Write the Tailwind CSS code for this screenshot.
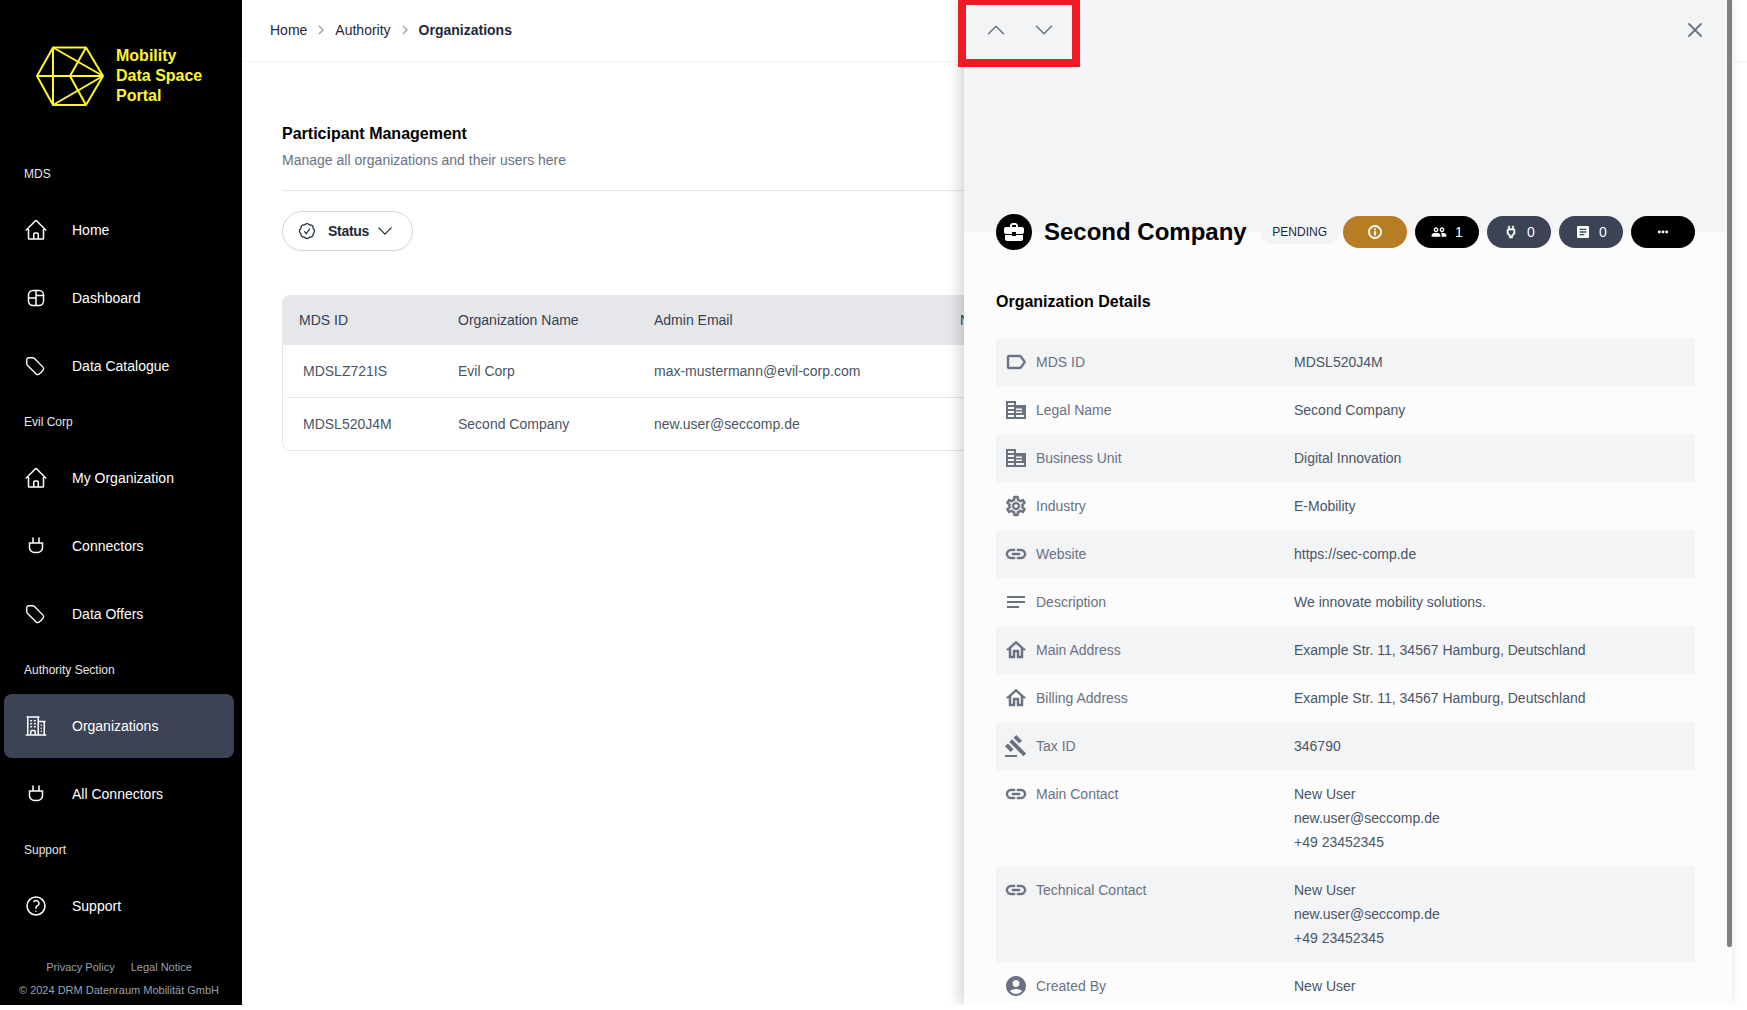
<!DOCTYPE html>
<html lang="en">
<head>
<meta charset="utf-8">
<title>Organizations</title>
<script src="https://cdn.jsdelivr.net/npm/@tailwindcss/browser@4"></script>
</head>
<body class="bg-white overflow-hidden font-['Liberation_Sans',Arial,sans-serif]">
<div class="relative flex h-[1005px] w-full overflow-hidden">

  <!-- Sidebar -->
  <aside class="w-[242px] shrink-0 bg-black flex flex-col text-white">
    <div class="flex items-center gap-3 pt-[46px] pl-[36px] mb-[60px]">
      <svg class="w-[68px] h-[60px] shrink-0" viewBox="0 0 68 60" fill="none" stroke="#fdf62f" stroke-width="2" stroke-linejoin="round"><path d="M1 30 17 1.500H50L67 30 50 59H17Z"/><path d="M1 30H67M17 1.500V59M17 1.500 67 30M17 59 67 30M50 1.500 34 30 50 59"/></svg>
      <div class="text-[16px] leading-5 font-bold text-[#fdf62f]"><div>Mobility</div><div>Data Space</div><div>Portal</div></div>
    </div>

    <div class="flex flex-col gap-4">
      <section class="flex flex-col gap-4">
        <div class="pl-6 text-xs leading-4 text-gray-200">MDS</div>
        <nav class="flex flex-col gap-1">
          <a class="ml-1 mr-2 h-16 px-5 flex items-center gap-6 rounded-lg text-sm"><svg class="w-6 h-6" viewBox="0 0 24 24" fill="none" stroke="currentColor" stroke-width="1.500" stroke-linecap="round" stroke-linejoin="round"><path d="M2.250 12l8.954-8.955c.44-.439 1.152-.439 1.591 0L21.750 12M4.500 9.750v10.125c0 .621.504 1.125 1.125 1.125H9.750v-4.875c0-.621.504-1.125 1.125-1.125h2.250c.621 0 1.125.504 1.125 1.125V21h4.125c.621 0 1.125-.504 1.125-1.125V9.750M8.250 21h8.250"/></svg>Home</a>
          <a class="ml-1 mr-2 h-16 px-5 flex items-center gap-6 rounded-lg text-sm"><svg class="w-6 h-6" viewBox="0 0 24 24" fill="none" stroke="currentColor" stroke-width="1.500" stroke-linecap="round" stroke-linejoin="round"><rect x="4.500" y="4.500" width="15" height="15" rx="4.500"/><path d="M12 4.500V19.500M4.500 12H12M12 9.500H19.500"/></svg>Dashboard</a>
          <a class="ml-1 mr-2 h-16 px-5 flex items-center gap-6 rounded-lg text-sm"><svg class="w-[22px] h-[22px] mr-[2px]" viewBox="0 0 24 24" fill="none" stroke="currentColor" stroke-width="1.500" stroke-linecap="round" stroke-linejoin="round"><path d="M9.568 3H5.250A2.250 2.250 0 0 0 3 5.250v4.318c0 .597.237 1.170.659 1.591l9.581 9.581c.699.699 1.780.872 2.607.33a18.095 18.095 0 0 0 5.223-5.223c.542-.827.369-1.908-.33-2.607L11.160 3.660A2.250 2.250 0 0 0 9.568 3Z"/></svg>Data Catalogue</a>
        </nav>
      </section>
      <section class="flex flex-col gap-4">
        <div class="pl-6 text-xs leading-4 text-gray-200">Evil Corp</div>
        <nav class="flex flex-col gap-1">
          <a class="ml-1 mr-2 h-16 px-5 flex items-center gap-6 rounded-lg text-sm"><svg class="w-6 h-6" viewBox="0 0 24 24" fill="none" stroke="currentColor" stroke-width="1.500" stroke-linecap="round" stroke-linejoin="round"><path d="M2.250 12l8.954-8.955c.44-.439 1.152-.439 1.591 0L21.750 12M4.500 9.750v10.125c0 .621.504 1.125 1.125 1.125H9.750v-4.875c0-.621.504-1.125 1.125-1.125h2.250c.621 0 1.125.504 1.125 1.125V21h4.125c.621 0 1.125-.504 1.125-1.125V9.750M8.250 21h8.250"/></svg>My Organization</a>
          <a class="ml-1 mr-2 h-16 px-5 flex items-center gap-6 rounded-lg text-sm"><svg class="w-6 h-6" viewBox="0 0 24 24" fill="none" stroke="currentColor" stroke-width="1.500" stroke-linecap="round" stroke-linejoin="round"><path d="M9 4v5M15 4v5M5.500 9h13v4.500a5 5 0 0 1-5 5h-3a5 5 0 0 1-5-5Z"/></svg>Connectors</a>
          <a class="ml-1 mr-2 h-16 px-5 flex items-center gap-6 rounded-lg text-sm"><svg class="w-[22px] h-[22px] mr-[2px]" viewBox="0 0 24 24" fill="none" stroke="currentColor" stroke-width="1.500" stroke-linecap="round" stroke-linejoin="round"><path d="M9.568 3H5.250A2.250 2.250 0 0 0 3 5.250v4.318c0 .597.237 1.170.659 1.591l9.581 9.581c.699.699 1.780.872 2.607.33a18.095 18.095 0 0 0 5.223-5.223c.542-.827.369-1.908-.33-2.607L11.160 3.660A2.250 2.250 0 0 0 9.568 3Z"/></svg>Data Offers</a>
        </nav>
      </section>
      <section class="flex flex-col gap-4">
        <div class="pl-6 text-xs leading-4 text-gray-200">Authority Section</div>
        <nav class="flex flex-col gap-1">
          <a class="ml-1 mr-2 h-16 px-5 flex items-center gap-6 rounded-lg text-sm bg-[#3b4354]"><svg class="w-6 h-6" viewBox="0 0 24 24" fill="none" stroke="currentColor" stroke-width="1.500" stroke-linecap="round" stroke-linejoin="round"><path d="M2.250 21h19.500m-18-18v18m10.500-18v18m6-13.500V21M6.750 6.750h.75m-.75 3h.75m-.75 3h.75m3-6h.75m-.75 3h.75m-.75 3h.75M6.750 21v-3.375c0-.621.504-1.125 1.125-1.125h2.250c.621 0 1.125.504 1.125 1.125V21M3 3h12m-.75 4.500H21m-3.750 3.750h.008v.008h-.008v-.008Zm0 3h.008v.008h-.008v-.008Zm0 3h.008v.008h-.008v-.008Z"/></svg>Organizations</a>
          <a class="ml-1 mr-2 h-16 px-5 flex items-center gap-6 rounded-lg text-sm"><svg class="w-6 h-6" viewBox="0 0 24 24" fill="none" stroke="currentColor" stroke-width="1.500" stroke-linecap="round" stroke-linejoin="round"><path d="M9 4v5M15 4v5M5.500 9h13v4.500a5 5 0 0 1-5 5h-3a5 5 0 0 1-5-5Z"/></svg>All Connectors</a>
        </nav>
      </section>
      <section class="flex flex-col gap-4">
        <div class="pl-6 text-xs leading-4 text-gray-200">Support</div>
        <nav class="flex flex-col gap-1">
          <a class="ml-1 mr-2 h-16 px-5 flex items-center gap-6 rounded-lg text-sm"><svg class="w-6 h-6" viewBox="0 0 24 24" fill="none" stroke="currentColor" stroke-width="1.500" stroke-linecap="round" stroke-linejoin="round"><path d="M9.879 7.519c1.171-1.025 3.071-1.025 4.242 0 1.172 1.025 1.172 2.687 0 3.712-.203.179-.43.326-.67.442-.745.361-1.450.999-1.450 1.827v.75M21 12a9 9 0 1 1-18 0 9 9 0 0 1 18 0Zm-9 5.250h.008v.008H12v-.008Z"/></svg>Support</a>
        </nav>
      </section>
    </div>

    <footer class="mt-[21px] text-[11px] leading-4 text-gray-400 flex flex-col items-center gap-[7px] pr-[4px]">
      <div class="flex gap-4"><span>Privacy Policy</span><span>Legal Notice</span></div>
      <div>© 2024 DRM Datenraum Mobilität GmbH</div>
    </footer>
  </aside>

  <!-- Main -->
  <main class="flex-1 min-w-0 flex flex-col">
    <div class="h-[62px] shrink-0 border-b border-gray-100 px-[28px] flex items-center gap-[5px] text-sm text-gray-800 pb-[2px]">
      <span>Home</span>
      <svg class="w-4 h-4 mx-[1px] text-gray-400" viewBox="0 0 24 24" fill="none" stroke="currentColor" stroke-width="2"><path d="M9 6l6 6-6 6"/></svg>
      <span>Authority</span>
      <svg class="w-4 h-4 mx-[1px] text-gray-400" viewBox="0 0 24 24" fill="none" stroke="currentColor" stroke-width="2"><path d="M9 6l6 6-6 6"/></svg>
      <span class="font-bold">Organizations</span>
    </div>
    <div class="px-10 pt-[60px]">
      <h1 class="text-base leading-6 font-bold text-black">Participant Management</h1>
      <p class="mt-[4px] text-sm leading-5 text-gray-500">Manage all organizations and their users here</p>
      <div class="mt-[20px] border-t border-gray-200"></div>
      <button class="mt-5 w-[131px] h-10 rounded-full border border-gray-300 pl-[14px] flex items-center text-sm font-bold text-gray-800 shadow-xs">
        <svg class="w-5 h-5 mr-[11px]" viewBox="0 0 24 24" fill="none" stroke="currentColor" stroke-width="1.500" stroke-linecap="round" stroke-linejoin="round"><path d="M9 12.750 11.250 15 15 9.750M21 12c0 1.268-.63 2.390-1.593 3.068a3.745 3.745 0 0 1-1.043 3.296 3.745 3.745 0 0 1-3.296 1.043A3.745 3.745 0 0 1 12 21c-1.268 0-2.390-.63-3.068-1.593a3.746 3.746 0 0 1-3.296-1.043 3.745 3.745 0 0 1-1.043-3.296A3.745 3.745 0 0 1 3 12c0-1.268.63-2.390 1.593-3.068a3.745 3.745 0 0 1 1.043-3.296 3.746 3.746 0 0 1 3.296-1.043A3.746 3.746 0 0 1 12 3c1.268 0 2.390.63 3.068 1.593a3.746 3.746 0 0 1 3.296 1.043 3.746 3.746 0 0 1 1.043 3.296A3.745 3.745 0 0 1 21 12Z"/></svg>
        <span class="tracking-[-0.3px]">Status</span>
        <svg class="w-5 h-5 ml-[6px]" viewBox="0 0 24 24" fill="none" stroke="currentColor" stroke-width="1.500" stroke-linecap="round" stroke-linejoin="round"><path d="m4.500 8.250 7.500 7.500 7.500-7.500"/></svg>
      </button>
      <div class="mt-[44px] rounded-lg border border-gray-200 overflow-hidden text-sm">
        <div class="h-[50px] -mx-px -mt-px bg-gray-200 flex items-center pl-[17px] text-gray-700">
          <div class="w-[159px]">MDS ID</div><div class="w-[196px]">Organization Name</div><div class="w-[306px]">Admin Email</div><div>Name</div>
        </div>
        <div class="mx-1 h-[53px] border-b border-gray-200 flex items-center pl-[16px] text-gray-600">
          <div class="w-[155px]">MDSLZ721IS</div><div class="w-[196px]">Evil Corp</div><div>max-mustermann@evil-corp.com</div>
        </div>
        <div class="mx-1 h-[52px] flex items-center pl-[16px] text-gray-600">
          <div class="w-[155px]">MDSL520J4M</div><div class="w-[196px]">Second Company</div><div>new.user@seccomp.de</div>
        </div>
      </div>
    </div>
  </main>

  <!-- Drawer -->
  <div class="absolute top-0 left-[964px] w-[768px] h-[1005px] bg-[#fcfcfc] shadow-[-4px_0_14px_rgba(0,0,0,0.18)] overflow-hidden">
    <div class="w-[763px]">
      <div class="h-[232px] bg-gray-100 px-8 pt-[18px] flex items-start justify-between text-gray-500">
        <div class="flex gap-6 -ml-3">
          <svg class="w-6 h-6" viewBox="0 0 24 24" fill="none" stroke="currentColor" stroke-width="1.500" stroke-linecap="round" stroke-linejoin="round"><path d="m4.500 15.750 7.500-7.500 7.500 7.500"/></svg>
          <svg class="w-6 h-6" viewBox="0 0 24 24" fill="none" stroke="currentColor" stroke-width="1.500" stroke-linecap="round" stroke-linejoin="round"><path d="m19.500 8.250-7.500 7.500-7.500-7.500"/></svg>
        </div>
        <svg class="w-6 h-6 -mr-3" viewBox="0 0 24 24" fill="none" stroke="currentColor" stroke-width="1.800" stroke-linecap="round" stroke-linejoin="round"><path d="M6 18 18 6M6 6l12 12"/></svg>
      </div>

      <div class="relative -mt-[18px] px-8 flex items-center h-9">
        <span class="w-9 h-9 rounded-full bg-black flex items-center justify-center shrink-0"><svg class="w-6 h-6" viewBox="0 0 24 24" fill="#fff"><path d="M10 16v-1H3.010L3 19c0 1.110.89 2 2 2h14c1.110 0 2-.89 2-2v-4h-7v1h-4zm10-9h-4.010V5l-2-2h-4l-2 2v2H4c-1.100 0-2 .9-2 2v3c0 1.110.89 2 2 2h6v-2h4v2h6c1.100 0 2-.9 2-2V9c0-1.100-.9-2-2-2zm-6 0h-4V5h4v2z"/></svg></span>
        <h2 class="ml-3 text-2xl font-bold text-black whitespace-nowrap">Second Company</h2>
        <span class="ml-[14px] w-[78px] h-6 rounded-full bg-gray-100 flex items-center justify-center text-xs text-gray-800">PENDING</span>
        <div class="ml-auto flex gap-2 text-white text-sm">
          <span class="w-16 h-8 rounded-full bg-[#b67d24] flex items-center justify-center"><svg class="w-4 h-4" viewBox="0 0 24 24" fill="currentColor" stroke="currentColor" stroke-width=".8"><path d="M11 7h2v2h-2zm0 4h2v6h-2zm1-9C6.480 2 2 6.480 2 12s4.480 10 10 10 10-4.480 10-10S17.520 2 12 2zm0 18c-4.410 0-8-3.590-8-8s3.590-8 8-8 8 3.590 8 8-3.590 8-8 8z"/></svg></span>
          <span class="w-16 h-8 rounded-full bg-black flex items-center justify-center gap-2"><svg class="w-4 h-4" viewBox="0 0 24 24" fill="currentColor"><path fill-rule="evenodd" d="M7.500 12C9.430 12 11 10.430 11 8.500S9.430 5 7.500 5 4 6.570 4 8.500 5.570 12 7.500 12zm0-5c.83 0 1.500.67 1.500 1.500S8.330 10 7.500 10 6 9.330 6 8.500 6.670 7 7.500 7zm9 5c1.930 0 3.500-1.570 3.500-3.500S18.430 5 16.500 5 13 6.570 13 8.500s1.570 3.500 3.500 3.500zm0-5c.83 0 1.500.67 1.500 1.500s-.67 1.500-1.500 1.500-1.500-.67-1.500-1.500.67-1.500 1.500-1.500zM7.500 13C5.330 13 1 14.080 1 16.250V19h13v-2.750C14 14.080 9.670 13 7.500 13zm9 0c-.6 0-1.300.08-2 .24 1.100.73 1.500 1.800 1.500 3.010V19h7v-2.750C23 14.080 18.670 13 16.500 13z"/></svg>1</span>
          <span class="w-16 h-8 rounded-full bg-[#3b4354] flex items-center justify-center gap-2"><svg class="w-4 h-4" viewBox="0 0 24 24" fill="currentColor" stroke="currentColor" stroke-width=".8"><path d="M16.010 7L16 3h-2v4h-4V3H8v4h-.01C7 6.990 6 7.990 6 8.990v5.490L9.500 18v3h5v-3l3.500-3.510v-5.500c0-1-1-2-1.990-1.990zM16 13.650l-3.500 3.520V19h-1v-1.830L8 13.650V9h8v4.650z"/></svg>0</span>
          <span class="w-16 h-8 rounded-full bg-[#3b4354] flex items-center justify-center gap-2"><svg class="w-4 h-4" viewBox="0 0 24 24" fill="currentColor"><path d="M19 3H5c-1.100 0-2 .9-2 2v14c0 1.100.9 2 2 2h14c1.100 0 2-.9 2-2V5c0-1.100-.9-2-2-2zm-5 14H7v-2h7v2zm3-4H7v-2h10v2zm0-4H7V7h10v2z"/></svg>0</span>
          <span class="w-16 h-8 rounded-full bg-black flex items-center justify-center"><svg class="w-4 h-4" viewBox="0 0 24 24" fill="currentColor"><circle cx="6.500" cy="12" r="2.200"/><circle cx="12" cy="12" r="2.200"/><circle cx="17.500" cy="12" r="2.200"/></svg></span>
        </div>
      </div>

      <h3 class="mx-8 mt-[40px] text-base leading-6 font-bold text-black">Organization Details</h3>

      <div class="mx-8 mt-[24px] text-sm leading-6">
        <div class="flex px-2 py-3 bg-gray-100"><div class="w-[290px] flex gap-2 text-gray-500"><svg class="w-6 h-6" viewBox="0 0 24 24" fill="currentColor" stroke="currentColor" stroke-width=".4"><path d="M17.630 5.840C17.270 5.330 16.670 5 16 5L5 5.010C3.900 5.010 3 5.900 3 7v10c0 1.100.9 1.990 2 1.990L16 19c.67 0 1.270-.33 1.630-.84L22 12l-4.370-6.160zM16 17H5V7h11l3.550 5L16 17z"/></svg>MDS ID</div><div class="text-gray-600">MDSL520J4M</div></div>
        <div class="flex px-2 py-3"><div class="w-[290px] flex gap-2 text-gray-500"><svg class="w-6 h-6" viewBox="0 0 24 24" fill="currentColor"><path d="M12 7V3H2v18h20V7H12zM10 19H4v-2h6v2zm0-4H4v-2h6v2zm0-4H4V9h6v2zm0-4H4V5h6v2zm10 12h-8v-2h8v2zm-2-4h-6v-1.500h6V15zm0-3h-6v-1.500h6V12zM20 9h-8V9h8z"/></svg>Legal Name</div><div class="text-gray-600">Second Company</div></div>
        <div class="flex px-2 py-3 bg-gray-100"><div class="w-[290px] flex gap-2 text-gray-500"><svg class="w-6 h-6" viewBox="0 0 24 24" fill="currentColor"><path d="M12 7V3H2v18h20V7H12zM10 19H4v-2h6v2zm0-4H4v-2h6v2zm0-4H4V9h6v2zm0-4H4V5h6v2zm10 12h-8v-2h8v2zm-2-4h-6v-1.500h6V15zm0-3h-6v-1.500h6V12zM20 9h-8V9h8z"/></svg>Business Unit</div><div class="text-gray-600">Digital Innovation</div></div>
        <div class="flex px-2 py-3"><div class="w-[290px] flex gap-2 text-gray-500"><svg class="w-6 h-6" viewBox="0 0 24 24" fill="currentColor" stroke="currentColor" stroke-width=".5"><path d="M19.430 12.980c.04-.32.07-.64.07-.98 0-.34-.03-.66-.07-.98l2.110-1.650c.19-.15.24-.42.12-.64l-2-3.460c-.09-.16-.26-.25-.44-.25-.06 0-.12.01-.17.03l-2.490 1c-.52-.4-1.080-.73-1.690-.98l-.38-2.650C14.460 2.180 14.250 2 14 2h-4c-.25 0-.46.18-.49.42l-.38 2.650c-.61.25-1.170.59-1.690.98l-2.490-1c-.06-.02-.12-.03-.18-.03-.17 0-.34.09-.43.25l-2 3.460c-.13.22-.07.49.12.64l2.110 1.650c-.04.32-.07.65-.07.98 0 .33.03.66.07.98l-2.110 1.650c-.19.15-.24.42-.12.64l2 3.460c.09.16.26.25.44.25.06 0 .12-.01.17-.03l2.490-1c.52.4 1.080.73 1.690.98l.38 2.650c.03.24.24.42.49.42h4c.25 0 .46-.18.49-.42l.38-2.650c.61-.25 1.170-.59 1.690-.98l2.490 1c.06.02.12.03.18.03.17 0 .34-.09.43-.25l2-3.460c.12-.22.07-.49-.12-.64l-2.110-1.650zm-1.980-1.710c.04.31.05.52.05.73 0 .21-.02.43-.05.73l-.14 1.130.89.7 1.080.84-.7 1.210-1.270-.51-1.040-.42-.9.68c-.43.32-.84.56-1.250.73l-1.060.43-.16 1.130-.2 1.350h-1.400l-.19-1.350-.16-1.130-1.060-.43c-.43-.18-.83-.41-1.230-.71l-.91-.7-1.060.43-1.270.51-.7-1.210 1.080-.84.89-.7-.14-1.130c-.03-.31-.05-.54-.05-.74s.02-.43.05-.73l.14-1.130-.89-.7-1.080-.84.7-1.210 1.270.51 1.040.42.9-.68c.43-.32.84-.56 1.250-.73l1.060-.43.16-1.130.2-1.350h1.390l.19 1.350.16 1.130 1.060.43c.43.18.83.41 1.230.71l.91.7 1.060-.43 1.270-.51.7 1.210-1.070.85-.89.7.14 1.130zM12 8c-2.210 0-4 1.790-4 4s1.790 4 4 4 4-1.790 4-4-1.790-4-4-4zm0 6c-1.100 0-2-.9-2-2s.9-2 2-2 2 .9 2 2-.9 2-2 2z"/></svg>Industry</div><div class="text-gray-600">E-Mobility</div></div>
        <div class="flex px-2 py-3 bg-gray-100"><div class="w-[290px] flex gap-2 text-gray-500"><svg class="w-6 h-6" viewBox="0 0 24 24" fill="currentColor" stroke="currentColor" stroke-width=".4"><path d="M3.900 12c0-1.710 1.390-3.100 3.100-3.100h4V7H7c-2.760 0-5 2.240-5 5s2.240 5 5 5h4v-1.900H7c-1.710 0-3.100-1.390-3.100-3.100zM8 13h8v-2H8v2zm9-6h-4v1.900h4c1.710 0 3.100 1.390 3.100 3.100s-1.390 3.100-3.100 3.100h-4V17h4c2.760 0 5-2.240 5-5s-2.240-5-5-5z"/></svg>Website</div><div class="text-gray-600">https://sec-comp.de</div></div>
        <div class="flex px-2 py-3"><div class="w-[290px] flex gap-2 text-gray-500"><svg class="w-6 h-6" viewBox="0 0 24 24" fill="currentColor"><path d="M21 11.010L3 11v2h18zM3 16h12v2H3zM21 6H3v2.010L21 8z"/></svg>Description</div><div class="text-gray-600">We innovate mobility solutions.</div></div>
        <div class="flex px-2 py-3 bg-gray-100"><div class="w-[290px] flex gap-2 text-gray-500"><svg class="w-6 h-6" viewBox="0 0 24 24" fill="currentColor" stroke="currentColor" stroke-width=".5"><path d="M12 5.690l5 4.500V18h-2v-6H9v6H7v-7.810l5-4.500M12 3L2 12h3v8h6v-6h2v6h6v-8h3L12 3z"/></svg>Main Address</div><div class="text-gray-600">Example Str. 11, 34567 Hamburg, Deutschland</div></div>
        <div class="flex px-2 py-3"><div class="w-[290px] flex gap-2 text-gray-500"><svg class="w-6 h-6" viewBox="0 0 24 24" fill="currentColor" stroke="currentColor" stroke-width=".5"><path d="M12 5.690l5 4.500V18h-2v-6H9v6H7v-7.810l5-4.500M12 3L2 12h3v8h6v-6h2v6h6v-8h3L12 3z"/></svg>Billing Address</div><div class="text-gray-600">Example Str. 11, 34567 Hamburg, Deutschland</div></div>
        <div class="flex px-2 py-3 bg-gray-100"><div class="w-[290px] flex gap-2 text-gray-500"><svg class="w-6 h-6" viewBox="0 0 24 24" fill="currentColor"><path d="M1 21h12v2H1zM5.245 8.070l2.830-2.827 14.140 14.142-2.828 2.828zM12.317 1l5.657 5.656-2.830 2.830-5.654-5.660zM3.825 9.485l5.657 5.657-2.828 2.828-5.657-5.657z"/></svg>Tax ID</div><div class="text-gray-600">346790</div></div>
        <div class="flex px-2 py-3"><div class="w-[290px] flex gap-2 text-gray-500"><svg class="w-6 h-6" viewBox="0 0 24 24" fill="currentColor" stroke="currentColor" stroke-width=".4"><path d="M3.900 12c0-1.710 1.390-3.100 3.100-3.100h4V7H7c-2.760 0-5 2.240-5 5s2.240 5 5 5h4v-1.900H7c-1.710 0-3.100-1.390-3.100-3.100zM8 13h8v-2H8v2zm9-6h-4v1.900h4c1.710 0 3.100 1.390 3.100 3.100s-1.390 3.100-3.100 3.100h-4V17h4c2.760 0 5-2.240 5-5s-2.240-5-5-5z"/></svg>Main Contact</div><div class="text-gray-600"><div>New User</div><div>new.user@seccomp.de</div><div>+49 23452345</div></div></div>
        <div class="flex px-2 py-3 bg-gray-100"><div class="w-[290px] flex gap-2 text-gray-500"><svg class="w-6 h-6" viewBox="0 0 24 24" fill="currentColor" stroke="currentColor" stroke-width=".4"><path d="M3.900 12c0-1.710 1.390-3.100 3.100-3.100h4V7H7c-2.760 0-5 2.240-5 5s2.240 5 5 5h4v-1.900H7c-1.710 0-3.100-1.390-3.100-3.100zM8 13h8v-2H8v2zm9-6h-4v1.900h4c1.710 0 3.100 1.390 3.100 3.100s-1.390 3.100-3.100 3.100h-4V17h4c2.760 0 5-2.240 5-5s-2.240-5-5-5z"/></svg>Technical Contact</div><div class="text-gray-600"><div>New User</div><div>new.user@seccomp.de</div><div>+49 23452345</div></div></div>
        <div class="flex px-2 py-3"><div class="w-[290px] flex gap-2 text-gray-500"><svg class="w-6 h-6" viewBox="0 0 24 24" fill="currentColor"><path d="M12 2C6.480 2 2 6.480 2 12s4.480 10 10 10 10-4.480 10-10S17.520 2 12 2zm0 4c1.930 0 3.500 1.570 3.500 3.500S13.930 13 12 13s-3.500-1.570-3.500-3.500S10.070 6 12 6zm0 14c-2.030 0-4.430-.82-6.140-2.880C7.550 15.800 9.680 15 12 15s4.450.8 6.140 2.120C16.430 19.180 14.030 20 12 20z"/></svg>Created By</div><div class="text-gray-600">New User</div></div>
      </div>
    </div>
    <div class="absolute top-0 right-0 w-[5px] h-[947px] bg-[#808080] rounded-b-[2px]"></div>
  </div>

  <!-- Red annotation box -->
  <div class="absolute top-0 left-[958px] w-[122px] h-[67px] border-[8px] border-t-[5px] border-[#ed1c24]"></div>
</div>
</body>
</html>
